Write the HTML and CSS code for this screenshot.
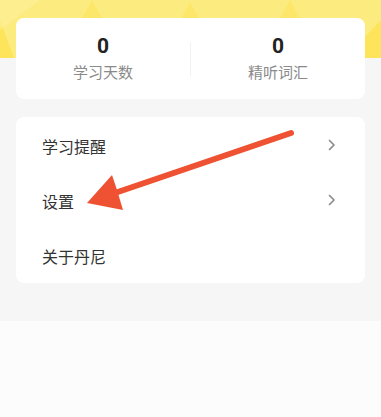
FILE: index.html
```html
<!DOCTYPE html>
<html lang="zh">
<head>
<meta charset="utf-8">
<link rel="stylesheet" href="styles.css">
</head>
<body>
<div class="page">
  <div class="header">
    <svg class="header-art" width="381" height="58" viewBox="0 0 381 58" preserveAspectRatio="none">
      <rect width="381" height="58" fill="#fcec80"/>
      <polygon points="0,20 14,58 0,58" fill="#fde45a"/>
      <polygon points="60,58 92,0 124,58" fill="#fde663" opacity="0.7"/>
      <polygon points="160,58 190,2 222,58" fill="#fde663" opacity="0.7"/>
      <polygon points="258,58 290,0 322,58" fill="#fde663" opacity="0.7"/>
      <polygon points="345,58 381,20 381,58" fill="#fde45a"/>
      <polygon points="0,0 40,0 0,30" fill="#fdf09a" opacity="0.6"/>
    </svg>
  </div>
  <div class="stats card">
    <div class="stat">
      <div class="num">0</div>
      <div class="label">学习天数</div>
    </div>
    <div class="divider"></div>
    <div class="stat">
      <div class="num">0</div>
      <div class="label">精听词汇</div>
    </div>
  </div>
  <div class="menu card">
    <div class="row"><span>学习提醒</span><svg class="chev" width="8" height="12" viewBox="0 0 8 12"><path d="M1.5 1.5 L6 6 L1.5 10.5" fill="none" stroke="#8c8c8c" stroke-width="1.7" stroke-linecap="round" stroke-linejoin="round"/></svg></div>
    <div class="row"><span>设置</span><svg class="chev" width="8" height="12" viewBox="0 0 8 12"><path d="M1.5 1.5 L6 6 L1.5 10.5" fill="none" stroke="#8c8c8c" stroke-width="1.7" stroke-linecap="round" stroke-linejoin="round"/></svg></div>
    <div class="row"><span>关于丹尼</span></div>
  </div>
  <div class="lower"></div>
  <svg class="arrow" width="381" height="417" viewBox="0 0 381 417">
    <line x1="291" y1="133" x2="112" y2="194" stroke="#ee5232" stroke-width="6" stroke-linecap="round"/>
    <polygon points="87,203 112,175 117,190 123,210" fill="#ee5232"/>
  </svg>
</div>
</body>
</html>
```
FILE: styles.css
```css
html, body {
  margin: 0;
  padding: 0;
}
body {
  background: #fcfcfc;
  font-family: "Noto Sans CJK SC", "Noto Sans", sans-serif;
}
.page {
  position: relative;
  width: 381px;
  height: 417px;
  overflow: hidden;
  background: #f6f6f6;
  display: flex;
  flex-direction: column;
}
.header {
  height: 58px;
  flex: none;
}
.header-art {
  display: block;
}
.card {
  position: relative;
  margin: 0 16px;
  background: #ffffff;
  border-radius: 8px;
}
.stats {
  margin-top: -40px;
  height: 81px;
  display: flex;
  align-items: center;
}
.stat {
  flex: 1;
  display: flex;
  flex-direction: column;
  align-items: center;
  padding-top: 1px;
}
.num {
  font-family: "Roboto", "Liberation Sans", sans-serif;
  font-weight: 700;
  font-size: 21px;
  line-height: 26px;
  color: #222222;
}
.label {
  font-size: 15px;
  line-height: 26px;
  color: #8a8a8a;
}
.divider {
  width: 1px;
  height: 34px;
  background: #f2f2f2;
}
.menu {
  margin-top: 18px;
  display: flex;
  flex-direction: column;
}
.row {
  height: 55px;
  display: flex;
  align-items: center;
  justify-content: space-between;
  padding: 0 29px 0 26px;
  font-size: 16px;
  color: #333333;
}
.row:first-child {
  margin-top: 1px;
}
.chev {
  display: block;
  margin-top: -2px;
}
.lower {
  margin-top: 38px;
  flex: 1;
  background: #fcfcfc;
}
.arrow {
  position: absolute;
  left: 0;
  top: 0;
}
```
